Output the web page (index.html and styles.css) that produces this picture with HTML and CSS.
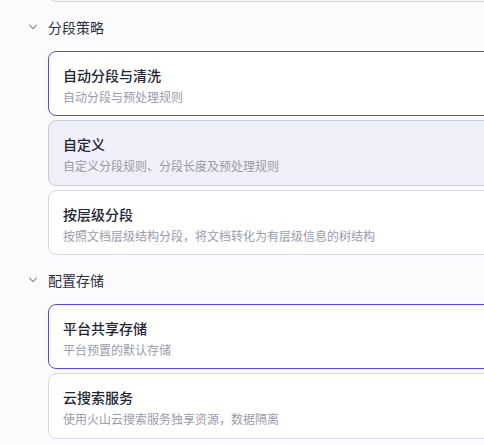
FILE: index.html
```html
<!DOCTYPE html>
<html lang="zh-CN">
<head>
  <meta charset="UTF-8">
  <title>知识库配置</title>
  <link rel="stylesheet" href="styles.css">
</head>
<body>

<div class="panel">
  <div class="option option-tail"></div>

  <div class="group-title">
    <svg class="chevron" width="10" height="10" viewBox="0 0 10 10">
      <path d="M1.5 3.2 L5 6.7 L8.5 3.2" fill="none" stroke="#8a8c99" stroke-width="1.2" stroke-linecap="round" stroke-linejoin="round"/>
    </svg>
    <span>分段策略</span>
  </div>

  <div class="options">
    <div class="option selected">
      <div class="option-name">自动分段与清洗</div>
      <div class="option-desc">自动分段与预处理规则</div>
    </div>
    <div class="option hover">
      <div class="option-name">自定义</div>
      <div class="option-desc">自定义分段规则、分段长度及预处理规则</div>
    </div>
    <div class="option">
      <div class="option-name">按层级分段</div>
      <div class="option-desc">按照文档层级结构分段，将文档转化为有层级信息的树结构</div>
    </div>
  </div>

  <div class="group-title">
    <svg class="chevron" width="10" height="10" viewBox="0 0 10 10">
      <path d="M1.5 3.2 L5 6.7 L8.5 3.2" fill="none" stroke="#8a8c99" stroke-width="1.2" stroke-linecap="round" stroke-linejoin="round"/>
    </svg>
    <span>配置存储</span>
  </div>

  <div class="options">
    <div class="option selected">
      <div class="option-name">平台共享存储</div>
      <div class="option-desc">平台预置的默认存储</div>
    </div>
    <div class="option">
      <div class="option-name">云搜索服务</div>
      <div class="option-desc">使用火山云搜索服务独享资源，数据隔离</div>
    </div>
  </div>
</div>

</body>
</html>
```

FILE: styles.css
```css
html, body {
  margin: 0;
  background-color: #fbfbfd;
  overflow: hidden;
}

body {
  font-family: "Noto Sans CJK SC", "Noto Sans", sans-serif;
  color: #1c1f2e;
}

.panel {
  padding-left: 48px;
  width: 520px;
}

.group-title {
  display: flex;
  align-items: center;
  margin: 13px 0 11.5px -20px;
  height: 24px;
  font-size: 14px;
  color: #2e303c;
}

.chevron {
  width: 10px;
  height: 10px;
  margin-right: 10px;
}

.options {
  display: flex;
  flex-direction: column;
  gap: 4px;
}

.option {
  box-sizing: border-box;
  height: 65.5px;
  padding: 13px 14px 9px;
  background-color: #fff;
  border: 1px solid #d5d7e5;
  border-radius: 8px;
}

.option-tail {
  margin-top: -63.5px;
  border-color: #d3d4de;
  background-color: #fbfbfd;
}

.option.selected {
  border-color: #554aef;
}

.option.hover {
  background-color: #eeeff8;
  border-color: #c9cbe0;
}

.option-name {
  font-size: 14px;
  font-weight: 500;
  line-height: 20px;
  color: #23252f;
}

.option-desc {
  margin-top: 3px;
  font-size: 12px;
  line-height: 18px;
  color: #9b9ca8;
}
```
